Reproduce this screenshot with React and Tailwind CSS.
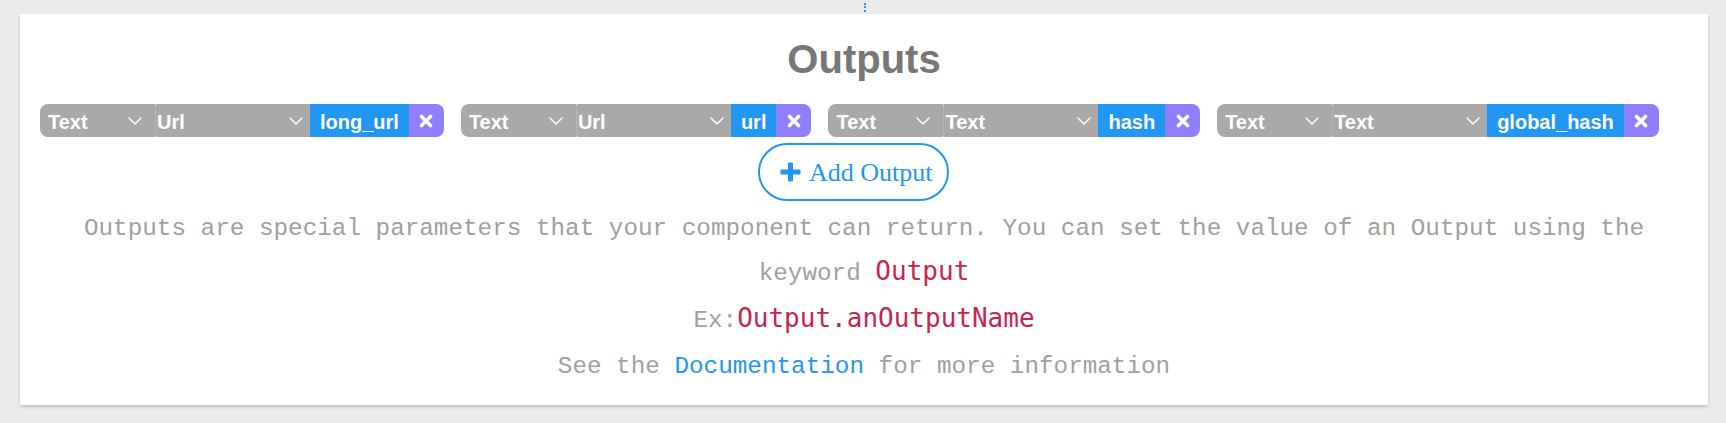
import React from "react";

const outputs = [
  { type: "Text", format: "Url", name: "long_url" },
  { type: "Text", format: "Url", name: "url" },
  { type: "Text", format: "Text", name: "hash" },
  { type: "Text", format: "Text", name: "global_hash" },
];

function Chevron() {
  return (
    <svg width="14" height="8" viewBox="0 0 14 8" fill="none">
      <polyline points="1,1 7,7 13,1" stroke="white" strokeWidth="1.5" strokeLinecap="round" strokeLinejoin="round" />
    </svg>
  );
}

function OutputChip({ type, format, name }) {
  return (
    <div className="flex h-[33px] items-stretch text-[20px] font-bold text-white">
      <div className="flex w-[115px] items-center justify-between rounded-l-[8px] bg-[#a9a9a9] pl-[8px] pr-[13px]">
        <span className="mt-[2px]">{type}</span>
        <Chevron />
      </div>
      <div className="flex w-[155px] items-center justify-between rounded-l-[2px] border-l border-[#b4b4b4] bg-[#a9a9a9] pl-[1px] pr-[7px]">
        <span className="mt-[2px]">{format}</span>
        <Chevron />
      </div>
      <div className="flex items-center bg-[#2196f3] px-[10px]">
        <span className="mt-[2px]">{name}</span>
      </div>
      <div className="flex w-[35px] items-center justify-center rounded-r-[8px] bg-[#8f7fff]">
        <svg width="14" height="14" viewBox="0 0 14 14">
          <path d="M2.5 2.5 L11.5 11.5 M11.5 2.5 L2.5 11.5" stroke="white" strokeWidth="3.6" strokeLinecap="round" />
        </svg>
      </div>
    </div>
  );
}

export default function App() {
  return (
    <div className="min-h-screen bg-[#ebebeb] font-['Liberation_Sans',Arial,sans-serif]">
      {/* resize handle */}
      <div className="flex h-[14px] flex-col items-center justify-center gap-[1.5px] pl-[4px]">
        <span className="size-[2px] bg-[#2196f3]" />
        <span className="size-[2px] bg-[#2196f3]" />
        <span className="size-[2px] bg-[#2196f3]" />
      </div>

      <div className="ml-[20px] w-[1688px] bg-white px-[20px] pt-[22px] pb-[15px] shadow-[0_2px_3px_rgba(0,0,0,0.18)]">
        <h1 className="text-center text-[40px] leading-[46px] font-bold text-[#777777]">Outputs</h1>

        <div className="mt-[22px] flex flex-wrap gap-[17px]">
          {outputs.map((o) => (
            <OutputChip key={o.name} {...o} />
          ))}
        </div>

        <div className="mt-[6px] flex justify-center pr-[21px]">
          <button className="flex h-[58px] w-[191px] items-center gap-[8px] rounded-full border-2 border-[#2196f3] pl-[20px] font-['Liberation_Serif','Times_New_Roman',serif] text-[26px] text-[#2196f3]">
            <svg width="21" height="20" viewBox="0 0 21 20">
              <path d="M8 1.5 a1 1 0 0 1 1 -1 h3 a1 1 0 0 1 1 1 V7.5 H19.5 a1 1 0 0 1 1 1 v3 a1 1 0 0 1 -1 1 H13 V18.5 a1 1 0 0 1 -1 1 h-3 a1 1 0 0 1 -1 -1 V12.5 H1.5 a1 1 0 0 1 -1 -1 v-3 a1 1 0 0 1 1 -1 H8 Z" fill="#2196f3" />
            </svg>
            <span>Add Output</span>
          </button>
        </div>

        <div className="mt-[5px] text-center font-['Liberation_Mono','Courier_New',monospace] text-[24.3px] text-[#a0a0a0]">
          <div className="leading-[46px]">
            Outputs are special parameters that your component can return. You can set the value of an Output using the
          </div>
          <div className="-mt-[4px] leading-[46px]">
            keyword <code className="font-['DejaVu_Sans_Mono',monospace] text-[26px] text-[#c7254e]">Output</code>
          </div>
          <div className="-mt-[2px] leading-[46px]">
            Ex:<code className="font-['DejaVu_Sans_Mono',monospace] text-[26px] text-[#c7254e]">Output.anOutputName</code>
          </div>
          <div className="leading-[46px]">
            See the <span className="text-[#2196f3]">Documentation</span> for more information
          </div>
        </div>
      </div>
    </div>
  );
}
